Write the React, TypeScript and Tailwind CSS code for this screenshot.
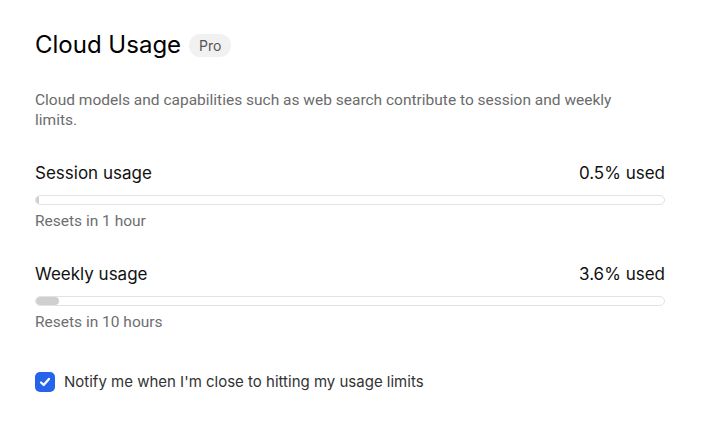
import { useState } from "react"

type UsageRowProps = {
    label: string
    used: number
    resets: string
}

function UsageRow({ label, used, resets }: UsageRowProps) {
    return (
        <div className="flex flex-col">
            <div className="flex items-center justify-between text-[17px] leading-[24px] text-[#111111]">
                <span>{label}</span>
                <span>{used}% used</span>
            </div>
            <div className="mt-[10px] h-[10px] w-full overflow-hidden rounded-full border border-[#e2e2e2] bg-white">
                <div
                    className="h-full rounded-full bg-[#cfcfcf]"
                    style={{ width: `${Math.max(used, 0.5)}%` }}
                />
            </div>
            <span className="mt-[6px] font-['Roboto',sans-serif] text-[15.5px] leading-[20px] text-[#6e6e6e]">
                {resets}
            </span>
        </div>
    )
}

export default function App() {
    const [notify, setNotify] = useState(true)

    return (
        <div className="min-h-[431px] w-[721px] bg-white font-['Inter',sans-serif]">
            <div className="flex w-[665px] flex-col pl-[35px] pt-[27px]">
                <div className="flex items-center gap-[8px]">
                    <h1 className="text-[24px] leading-[36px] font-normal text-black">
                        Cloud Usage
                    </h1>
                    <span className="rounded-full bg-[#f1f1f1] px-[10px] py-[1px] text-[14px] leading-[21px] text-[#555555]">
                        Pro
                    </span>
                </div>

                <p className="mt-[27px] w-[600px] font-['Roboto',sans-serif] text-[15.5px] leading-[20px] text-[#6b6b6b]">
                    Cloud models and capabilities such as web search contribute to session
                    and weekly limits.
                </p>

                <div className="mt-[31px] flex flex-col gap-[31px]">
                    <UsageRow label="Session usage" used={0.5} resets="Resets in 1 hour" />
                    <UsageRow label="Weekly usage" used={3.6} resets="Resets in 10 hours" />
                </div>

                <label className="mt-[39px] flex cursor-pointer items-center gap-[9px] text-[15px] text-[#333333]">
                    <input
                        type="checkbox"
                        checked={notify}
                        onChange={() => setNotify(!notify)}
                        className="sr-only"
                    />
                    <span className="flex h-[20px] w-[20px] items-center justify-center rounded-[5px] bg-[#2563eb]">
                        {notify && (
                            <svg viewBox="0 0 16 16" className="h-[14px] w-[14px]" fill="none">
                                <path
                                    d="M3.5 8.5l3 3 6-7"
                                    stroke="white"
                                    strokeWidth="2.6"
                                    strokeLinecap="round"
                                    strokeLinejoin="round"
                                />
                            </svg>
                        )}
                    </span>
                    Notify me when I'm close to hitting my usage limits
                </label>
            </div>
        </div>
    )
}
